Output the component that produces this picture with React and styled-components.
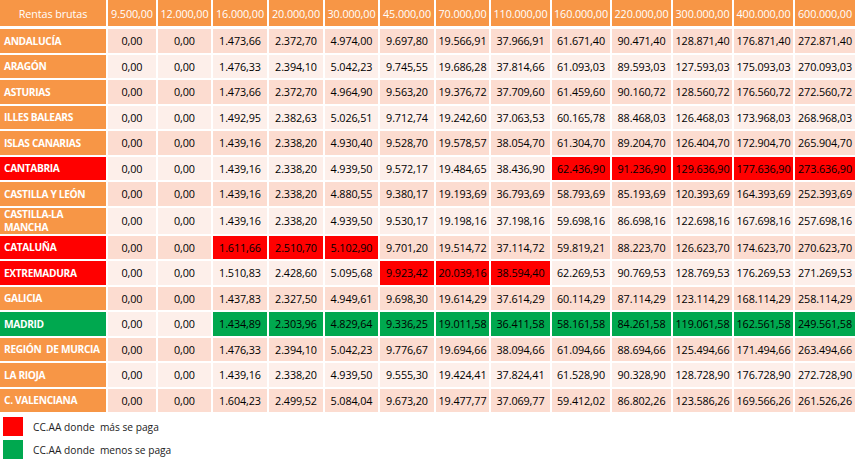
import React from "react";
import styled, { createGlobalStyle } from "styled-components";

const GlobalStyle = createGlobalStyle`
  html, body {
    margin: 0;
    padding: 0;
    background: #fff;
  }

  body {
    font-family: "Open Sans", "Liberation Sans", sans-serif;
  }
`;

const ORANGE = "#f79646";
const ROW_DARK = "#fcdcd0";
const ROW_LIGHT = "#fdefea";
const RED = "#ff0000";
const GREEN = "#00a84f";

const COLUMNS = [
  108, 50, 55, 56, 56, 55, 56, 55, 61, 60, 61, 61, 61, 60,
];

const HEADERS = [
  "9.500,00",
  "12.000,00",
  "16.000,00",
  "20.000,00",
  "30.000,00",
  "45.000,00",
  "70.000,00",
  "110.000,00",
  "160.000,00",
  "220.000,00",
  "300.000,00",
  "400.000,00",
  "600.000,00",
];

// mark: which cells are painted, from index `from` to `to` (inclusive)
const ROWS = [
  {
    name: "ANDALUCÍA",
    values: ["0,00", "0,00", "1.473,66", "2.372,70", "4.974,00", "9.697,80", "19.566,91", "37.966,91", "61.671,40", "90.471,40", "128.871,40", "176.871,40", "272.871,40"],
  },
  {
    name: "ARAGÓN",
    values: ["0,00", "0,00", "1.476,33", "2.394,10", "5.042,23", "9.745,55", "19.686,28", "37.814,66", "61.093,03", "89.593,03", "127.593,03", "175.093,03", "270.093,03"],
  },
  {
    name: "ASTURIAS",
    values: ["0,00", "0,00", "1.473,66", "2.372,70", "4.964,90", "9.563,20", "19.376,72", "37.709,60", "61.459,60", "90.160,72", "128.560,72", "176.560,72", "272.560,72"],
  },
  {
    name: "ILLES BALEARS",
    values: ["0,00", "0,00", "1.492,95", "2.382,63", "5.026,51", "9.712,74", "19.242,60", "37.063,53", "60.165,78", "88.468,03", "126.468,03", "173.968,03", "268.968,03"],
  },
  {
    name: "ISLAS CANARIAS",
    values: ["0,00", "0,00", "1.439,16", "2.338,20", "4.930,40", "9.528,70", "19.578,57", "38.054,70", "61.304,70", "89.204,70", "126.404,70", "172.904,70", "265.904,70"],
  },
  {
    name: "CANTABRIA",
    tone: "red",
    mark: { from: 8, to: 12 },
    values: ["0,00", "0,00", "1.439,16", "2.338,20", "4.939,50", "9.572,17", "19.484,65", "38.436,90", "62.436,90", "91.236,90", "129.636,90", "177.636,90", "273.636,90"],
  },
  {
    name: "CASTILLA Y LEÓN",
    values: ["0,00", "0,00", "1.439,16", "2.338,20", "4.880,55", "9.380,17", "19.193,69", "36.793,69", "58.793,69", "85.193,69", "120.393,69", "164.393,69", "252.393,69"],
  },
  {
    name: "CASTILLA-LA MANCHA",
    tall: true,
    values: ["0,00", "0,00", "1.439,16", "2.338,20", "4.939,50", "9.530,17", "19.198,16", "37.198,16", "59.698,16", "86.698,16", "122.698,16", "167.698,16", "257.698,16"],
  },
  {
    name: "CATALUÑA",
    tone: "red",
    mark: { from: 2, to: 4 },
    values: ["0,00", "0,00", "1.611,66", "2.510,70", "5.102,90", "9.701,20", "19.514,72", "37.114,72", "59.819,21", "88.223,70", "126.623,70", "174.623,70", "270.623,70"],
  },
  {
    name: "EXTREMADURA",
    tone: "red",
    mark: { from: 5, to: 7 },
    values: ["0,00", "0,00", "1.510,83", "2.428,60", "5.095,68", "9.923,42", "20.039,16", "38.594,40", "62.269,53", "90.769,53", "128.769,53", "176.269,53", "271.269,53"],
  },
  {
    name: "GALICIA",
    values: ["0,00", "0,00", "1.437,83", "2.327,50", "4.949,61", "9.698,30", "19.614,29", "37.614,29", "60.114,29", "87.114,29", "123.114,29", "168.114,29", "258.114,29"],
  },
  {
    name: "MADRID",
    tone: "green",
    mark: { from: 2, to: 12 },
    values: ["0,00", "0,00", "1.434,89", "2.303,96", "4.829,64", "9.336,25", "19.011,58", "36.411,58", "58.161,58", "84.261,58", "119.061,58", "162.561,58", "249.561,58"],
  },
  {
    name: "REGIÓN\u00a0 DE MURCIA",
    values: ["0,00", "0,00", "1.476,33", "2.394,10", "5.042,23", "9.776,67", "19.694,66", "38.094,66", "61.094,66", "88.694,66", "125.494,66", "171.494,66", "263.494,66"],
  },
  {
    name: "LA RIOJA",
    values: ["0,00", "0,00", "1.439,16", "2.338,20", "4.939,50", "9.555,30", "19.424,41", "37.824,41", "61.528,90", "90.328,90", "128.728,90", "176.728,90", "272.728,90"],
  },
  {
    name: "C. VALENCIANA",
    values: ["0,00", "0,00", "1.604,23", "2.499,52", "5.084,04", "9.673,20", "19.477,77", "37.069,77", "59.412,02", "86.802,26", "123.586,26", "169.566,26", "261.526,26"],
  },
];

const toneColor = (tone) => {
  if (tone === "red") return RED;
  if (tone === "green") return GREEN;
  return ORANGE;
};

const Page = styled.div`
  width: 856px;
  height: 462px;
  overflow: hidden;
  background: #fff;
`;

const Table = styled.table`
  width: 855px;
  table-layout: fixed;
  border-collapse: separate;
  border-spacing: 0;
`;

const HeadCell = styled.th`
  height: 29px;
  padding: 0;
  box-sizing: border-box;
  background: ${ORANGE};
  color: #fff;
  font-size: 10.8px;
  font-weight: 400;
  letter-spacing: -0.1px;
  text-align: center;
  white-space: nowrap;
  border-bottom: 3px solid #fff;
  border-right: 2px solid #fff;

  &:last-child {
    border-right: 0;
  }
`;

const Row = styled.tr`
  height: ${(p) => (p.$tall ? "28px" : "25.5px")};
`;

const NameCell = styled.td`
  padding: 0 0 0 4px;
  background: ${(p) => toneColor(p.$tone)};
  color: #fff;
  font-size: 10.2px;
  font-weight: 700;
  line-height: 12.5px;
  letter-spacing: -0.35px;
  text-align: left;
  white-space: ${(p) => (p.$wrap ? "normal" : "nowrap")};
  overflow: hidden;
  border-bottom: 2px solid #fff;
  border-right: 2px solid #fff;
`;

const ValueCell = styled.td`
  padding: 0;
  background: ${(p) => p.$paint || (p.$odd ? ROW_DARK : ROW_LIGHT)};
  color: #000;
  font-size: 10.8px;
  letter-spacing: -0.1px;
  text-align: center;
  white-space: nowrap;
  border-bottom: 2px solid #fff;
  border-right: 2px solid #fff;

  &:last-child {
    border-right: 0;
  }
`;

const Legend = styled.div`
  display: flex;
  flex-direction: column;
  gap: 4px;
  padding: 3px 0 0 3px;
`;

const LegendItem = styled.div`
  display: flex;
  align-items: center;
  gap: 10px;
  height: 19px;
`;

const Swatch = styled.span`
  width: 20px;
  height: 19px;
  background: ${(p) => p.$color};
`;

const LegendText = styled.span`
  font-size: 10.2px;
  color: #222;
  white-space: pre;
`;

const App = () => {
  return (
    <Page>
      <GlobalStyle />
      <Table>
        <colgroup>
          {COLUMNS.map((w, i) => (
            <col key={i} style={{ width: w }} />
          ))}
        </colgroup>
        <thead>
          <tr>
            <HeadCell>Rentas brutas</HeadCell>
            {HEADERS.map((h) => (
              <HeadCell key={h}>{h}</HeadCell>
            ))}
          </tr>
        </thead>
        <tbody>
          {ROWS.map((row, r) => (
            <Row key={row.name} $tall={row.tall}>
              <NameCell $tone={row.tone} $wrap={row.tall}>
                {row.name}
              </NameCell>
              {row.values.map((v, i) => {
                const painted =
                  row.mark && i >= row.mark.from && i <= row.mark.to;
                return (
                  <ValueCell
                    key={i}
                    $odd={r % 2 === 0}
                    $paint={painted ? toneColor(row.tone) : null}
                  >
                    {v}
                  </ValueCell>
                );
              })}
            </Row>
          ))}
        </tbody>
      </Table>
      <Legend>
        <LegendItem>
          <Swatch $color={RED} />
          <LegendText>CC.AA donde  más se paga</LegendText>
        </LegendItem>
        <LegendItem>
          <Swatch $color={GREEN} />
          <LegendText>CC.AA donde  menos se paga</LegendText>
        </LegendItem>
      </Legend>
    </Page>
  );
};

export default App;
